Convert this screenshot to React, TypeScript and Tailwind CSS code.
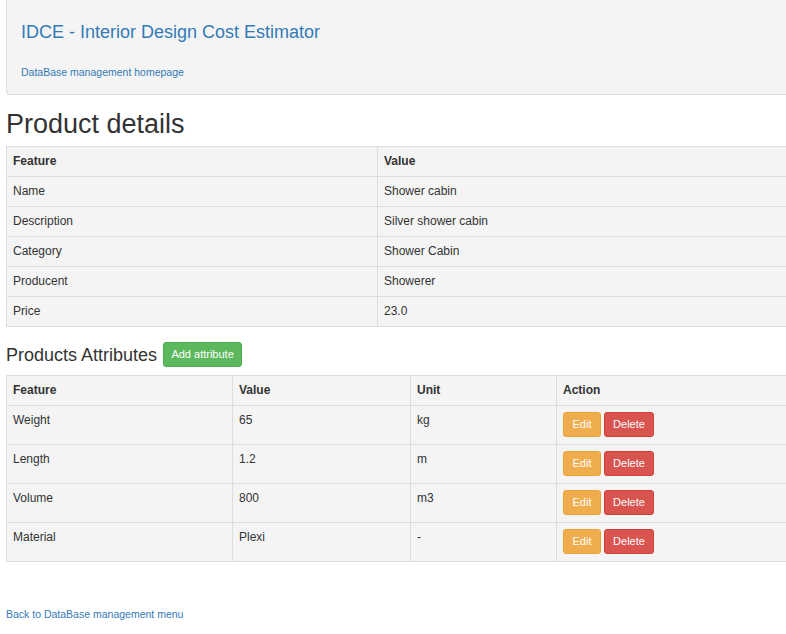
import React from "react";

type Row = { feature: string; value: string; unit?: string };

const details: Row[] = [
  { feature: "Name", value: "Shower cabin" },
  { feature: "Description", value: "Silver shower cabin" },
  { feature: "Category", value: "Shower Cabin" },
  { feature: "Producent", value: "Showerer" },
  { feature: "Price", value: "23.0" },
];

const attributes: Row[] = [
  { feature: "Weight", value: "65", unit: "kg" },
  { feature: "Length", value: "1.2", unit: "m" },
  { feature: "Volume", value: "800", unit: "m3" },
  { feature: "Material", value: "Plexi", unit: "-" },
];

const th = "border border-[#ddd] px-[6px] h-[30px] text-left font-bold align-middle";
const td = "border border-[#ddd] px-[6px] h-[30px] align-middle";
const tdTop = "border border-[#ddd] px-[6px] pt-[6px] h-[39px] align-top";

export default function App() {
  return (
    <div
      className="w-[786px] h-[634px] overflow-hidden bg-white text-[#333] text-[12px] leading-[17px]"
      style={{ fontFamily: '"Liberation Sans", Arial, sans-serif' }}
    >
      {/* Header */}
      <div className="ml-[6px] w-[800px] h-[95px] bg-[#f4f4f4] border-l border-b border-[#ddd] rounded-bl-[4px] pl-[14px] pt-[22px]">
        <a className="block text-[18px] leading-[20px] text-[#337ab7]">
          IDCE - Interior Design Cost Estimator
        </a>
        <a className="block mt-[24px] text-[10.5px] leading-[13px] text-[#337ab7]">
          DataBase management homepage
        </a>
      </div>

      <div className="pl-[6px]">
        <h1 className="mt-[14px] text-[27px] leading-[30px] font-normal">Product details</h1>

        {/* Product details table */}
        <table className="mt-[7px] w-[800px] border-collapse bg-[#f4f4f4]">
          <colgroup>
            <col className="w-[371px]" />
            <col />
          </colgroup>
          <thead>
            <tr>
              <th className={th}>Feature</th>
              <th className={th}>Value</th>
            </tr>
          </thead>
          <tbody>
            {details.map((r) => (
              <tr key={r.feature}>
                <td className={td}>{r.feature}</td>
                <td className={td}>{r.value}</td>
              </tr>
            ))}
          </tbody>
        </table>

        {/* Attributes heading */}
        <div className="mt-[15px] flex items-center h-[25px]">
          <h2 className="text-[18px] leading-[20px] font-normal">Products Attributes</h2>
          <button className="ml-[6px] h-[25px] w-[79px] rounded-[3px] bg-[#5cb85c] border border-[#4cae4c] text-white text-[11px]">
            Add attribute
          </button>
        </div>

        {/* Attributes table */}
        <table className="mt-[8px] w-[800px] border-collapse bg-[#f4f4f4]">
          <colgroup>
            <col className="w-[226px]" />
            <col className="w-[178px]" />
            <col className="w-[146px]" />
            <col />
          </colgroup>
          <thead>
            <tr>
              <th className={th}>Feature</th>
              <th className={th}>Value</th>
              <th className={th}>Unit</th>
              <th className={th}>Action</th>
            </tr>
          </thead>
          <tbody>
            {attributes.map((r) => (
              <tr key={r.feature}>
                <td className={tdTop}>{r.feature}</td>
                <td className={tdTop}>{r.value}</td>
                <td className={tdTop}>{r.unit}</td>
                <td className={tdTop}>
                  <div className="flex gap-[3px]">
                    <button className="h-[25px] w-[38px] rounded-[3px] bg-[#f0ad4e] border border-[#eea236] text-white text-[11px]">
                      Edit
                    </button>
                    <button className="h-[25px] w-[50px] rounded-[3px] bg-[#d9534f] border border-[#d43f3a] text-white text-[11px]">
                      Delete
                    </button>
                  </div>
                </td>
              </tr>
            ))}
          </tbody>
        </table>

        <a className="block mt-[46px] text-[10.5px] leading-[13px] text-[#337ab7]">
          Back to DataBase management menu
        </a>
      </div>
    </div>
  );
}
